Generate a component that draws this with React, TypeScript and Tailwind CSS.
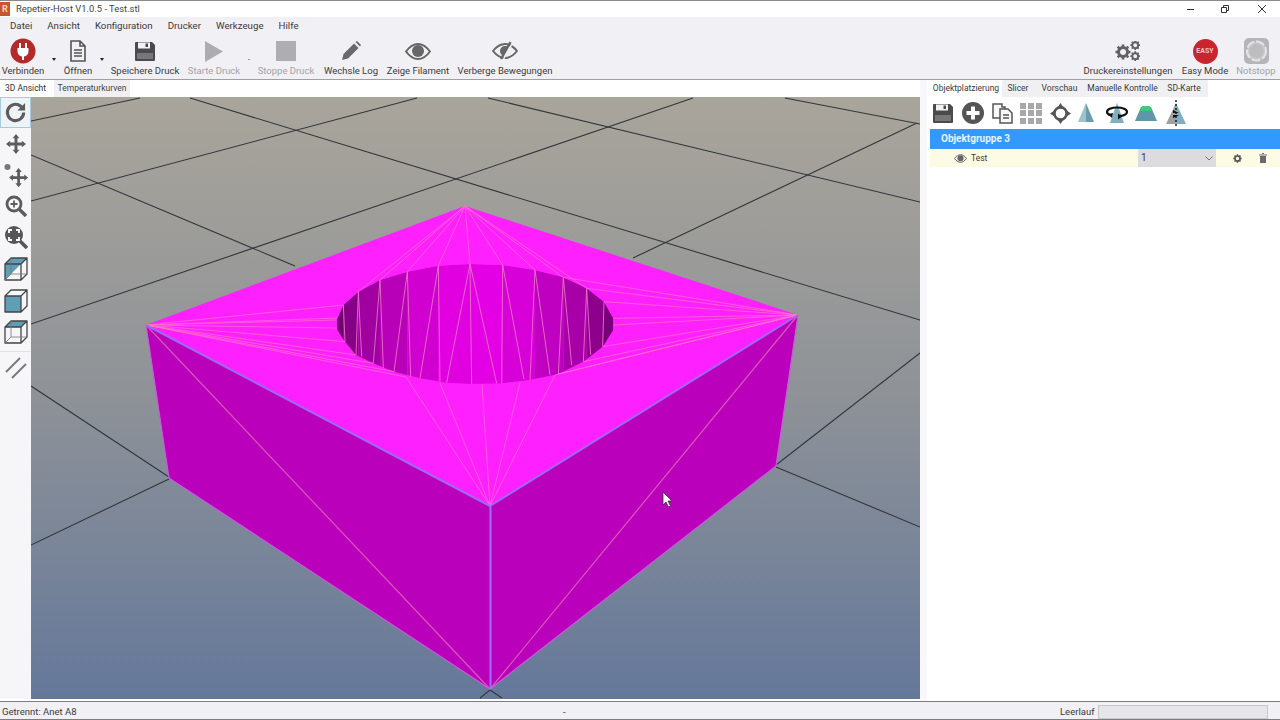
import React from "react";

const toPage = (p: number[]) => [p[0] / 3 + 320, p[1] / 3 + 250];
const topArc = [[50,210],[70,165],[115,125],[180,90],[262,65],[355,47],[450,42],[548,45],[645,60],[730,82],[800,115],[852,155],[880,205]].map(toPage);
const lowArc = [[52,240],[75,275],[108,315],[160,340],[222,365],[300,385],[380,398],[455,402],[545,400],[630,390],[715,372],[790,335],[848,290],[880,240]].map(toPage);
const holeShape = [...topArc, ...[...lowArc].reverse()].map((p) => p.join(",")).join(" ");
const stripColours = ["#700070","#850085","#a000a0","#b800b8","#d000d0","#e000e0","#e400e4","#d800d8","#c000c0","#a800a8","#8c008c","#7a007a"];
const wallLines = [[70,165,75,275],[115,125,125,320],[115,125,108,315],[180,90,160,340],[180,90,190,355],[262,65,222,365],[262,65,272,380],[355,47,300,385],[355,47,360,395],[450,42,380,398],[450,42,455,402],[450,42,530,400],[548,45,545,400],[548,45,612,388],[645,60,630,390],[645,60,690,375],[730,82,715,372],[730,82,755,345],[800,115,790,335],[800,115,812,315],[852,155,848,290]];
const apex = [465, 206], left = [146, 325], right = [798, 315], front = [490, 506];
const fans: [number[], number[][]][] = [
  [apex, [topArc[2], topArc[3], topArc[4], topArc[5], topArc[6], topArc[7], topArc[8], topArc[9], topArc[10]]],
  [left, [topArc[1], topArc[0], [337, 318], [337, 328], lowArc[1], lowArc[2], lowArc[3], lowArc[4], [406, 377]]],
  [right, [topArc[9], topArc[10], topArc[11], topArc[12], [613, 325], lowArc[12], lowArc[11], lowArc[10], [555, 375]]],
  [front, [[406, 377], [440, 383], [482, 384], [520, 383], [555, 375]]],
];
const grid = [
  [31,121,140,98],[31,201,417,98],[31,324,693,98],[31,155,295,266],[190,98,920,320],[488,98,920,202],[785,98,920,124],[633,258,917,123],
  [31,386,169,477],[31,545,169,479],[920,353,776,465],[776,467,920,527],[490,690,480,698],[490,690,502,698],
];

function Scene() {
  return (
    <svg viewBox="31 97 889 602" className="block h-full w-full">
      <defs>
        <clipPath id="hole"><polygon points={holeShape} /></clipPath>
      </defs>
      {grid.map((g, i) => (
        <line key={i} x1={g[0]} y1={g[1]} x2={g[2]} y2={g[3]} stroke="#33363a" strokeWidth="1.1" />
      ))}
      <polygon points="146,325 490,506 490,689 169,478" fill="#bb00bb" />
      <polygon points="798,315 490,506 490,689 776,466" fill="#bb00bb" />
      <polygon points="465,206 798,315 490,506 146,325" fill="#ff20ff" />
      {topArc.slice(0, -1).map((p, i) => {
        const q = topArc[i + 1];
        return <polygon key={i} points={`${p[0]},${p[1]} ${q[0]},${q[1]} ${q[0]},390 ${p[0]},390`} fill={stripColours[i]} clipPath="url(#hole)" />;
      })}
      {wallLines.map((l, i) => {
        const a = toPage([l[0], l[1]]), b = toPage([l[2], l[3]]);
        return <line key={i} x1={a[0]} y1={a[1]} x2={b[0]} y2={b[1]} stroke="#ec78c8" strokeWidth="1" opacity="0.85" />;
      })}
      {fans.map(([o, targets], i) => targets.map((t, j) => (
        <line key={`${i}-${j}`} x1={o[0]} y1={o[1]} x2={t[0]} y2={t[1]} stroke="#ff78c8" strokeWidth="1" opacity="0.65" />
      )))}
      <line x1="146" y1="325" x2="490" y2="689" stroke="#d858b8" strokeWidth="1.200" />
      <line x1="798" y1="315" x2="490" y2="689" stroke="#d858b8" strokeWidth="1.200" />
      <line x1="146" y1="325" x2="169" y2="478" stroke="#c060d8" strokeWidth="1.200" />
      <line x1="798" y1="315" x2="776" y2="466" stroke="#c060d8" strokeWidth="1.200" />
      <line x1="169" y1="478" x2="490" y2="689" stroke="#c060d8" strokeWidth="1.200" />
      <line x1="776" y1="466" x2="490" y2="689" stroke="#c060d8" strokeWidth="1.200" />
      <line x1="146" y1="325" x2="490" y2="506" stroke="#9a6cf0" strokeWidth="2" />
      <line x1="798" y1="315" x2="490" y2="506" stroke="#9a6cf0" strokeWidth="2" />
      <line x1="490.5" y1="506" x2="490.5" y2="689" stroke="#9a70f8" strokeWidth="2" />
      <path d="M663 492v13l3-3 2.500 5 2-1-2.500-5h4z" fill="#fff" stroke="#333" strokeWidth="0.800" />
    </svg>
  );
}

const Doc = () => (
  <svg width="18" height="22" viewBox="0 0 18 22" fill="none" stroke="#555" strokeWidth="1.600">
    <path d="M2 1h9l5 5v15H2zM11 1v5h5" /><path d="M5 10h8M5 13h8M5 16h8" />
  </svg>
);
const Floppy = ({ w = 20, h = 19 }: { w?: number; h?: number }) => (
  <svg width={w} height={h} viewBox="0 0 20 19">
    <path d="M1 0h16l3 3v15a1 1 0 0 1-1 1H1a1 1 0 0 1-1-1V1a1 1 0 0 1 1-1z" fill="#4b4b4e" />
    <rect x="3" y="0.500" width="12" height="6" fill="#f3f3f5" /><rect x="10.500" y="1.500" width="2.500" height="3.500" fill="#4b4b4e" />
    <rect x="2" y="11" width="16" height="6" fill="#77777a" />
  </svg>
);
const Eye = () => (
  <svg width="26" height="17" viewBox="0 0 26 17">
    <path d="M1 8.500C5 3 9 1 13 1s8 2 12 7.500C21 14 17 16 13 16S5 14 1 8.500z" fill="#f0f0f3" stroke="#666" strokeWidth="2" />
    <circle cx="13" cy="8" r="6" fill="#666" />
  </svg>
);
const EyeOff = () => (
  <svg width="26" height="20" viewBox="0 0 26 20">
    <path d="M1 10C5 5 9 3 13 3s8 2 12 7c-4 5-8 7-12 7S5 15 1 10z" fill="#f0f0f3" stroke="#666" strokeWidth="2" />
    <path d="M13 5a5 5 0 0 0-5 5 5 5 0 0 0 3 4.500L16.500 6a5 5 0 0 0-3.500-1z" fill="#666" />
    <path d="M20.500 2 11 19" stroke="#f1f0f4" strokeWidth="1.500" />
    <path d="M18.500 1 9 18" stroke="#666" strokeWidth="2.400" />
  </svg>
);
const Gear = ({ c = "#666", size = 16 }: { c?: string; size?: number }) => (
  <svg width={size} height={size} viewBox="0 0 16 16">
    <circle cx="8" cy="8" r="4.500" fill="none" stroke={c} strokeWidth="3" />
    <path d="M8 0.500v3M8 12.500v3M0.500 8h3M12.500 8h3M2.700 2.700l2.100 2.100M11.200 11.200l2.100 2.100M2.700 13.300l2.100-2.100M11.200 4.800l2.100-2.100" stroke={c} strokeWidth="2.600" />
  </svg>
);
const Cone = () => (
  <svg width="20" height="24" viewBox="0 0 20 24">
    <path d="M10 2 2 21h8z" fill="#9cc4d0" /><path d="M10 2l8 19h-8z" fill="#6a9cb0" />
  </svg>
);

function TbBtn({ w, label, off, children }: { w: string; label: string; off?: boolean; children: React.ReactNode }) {
  return (
    <div className={`flex h-full flex-col items-center ${w}`}>
      <div className="flex h-[27px] items-center justify-center pt-[3px]">{children}</div>
      <div className={`whitespace-nowrap pt-[1px] text-[9.5px] leading-[13px] ${off ? "text-[#a3a3a6]" : "text-[#3a3a3c]"}`}>{label}</div>
    </div>
  );
}
const Dot = ({ w, off }: { w: string; off?: boolean }) => (
  <div className={`flex h-full items-center justify-center pt-[4px] ${w}`}>
    {off ? <span className="block h-[1px] w-[3px] bg-[#999]" /> : <span className="block h-0 w-0 border-x-[2px] border-t-[3px] border-x-transparent border-t-[#222]" />}
  </div>
);
const LeftIcon = ({ active, children }: { active?: boolean; children: React.ReactNode }) => (
  <div className={`flex h-[31px] w-[31px] items-center justify-center ${active ? "border border-[#a9c9dd] bg-[#eef3f8]" : ""}`}>{children}</div>
);
const Cube = ({ mode }: { mode: "half" | "front" | "top" }) => (
  <svg width="24" height="24" viewBox="0 0 24 24" strokeLinejoin="round">
    {mode === "half" && <polygon points="1,7 17,7 1,23" fill="#5f9fb5" />}
    {mode === "half" && <polygon points="1,7 7,1 23,1 17,7" fill="#5f9fb5" />}
    {mode === "front" && <rect x="1" y="7" width="16" height="16" fill="#5f9fb5" />}
    {mode === "top" && <polygon points="1,7 7,1 23,1 17,7" fill="#5f9fb5" />}
    <path d="M1 7h16v16H1zM1 7l6-6h16v16l-6 6M17 7l6-6" fill="none" stroke="#444" strokeWidth="1.300" />
    {mode !== "front" && <path d="M7 1v16h16M7 17l-6 6" fill="none" stroke="#777" strokeWidth="0.800" />}
  </svg>
);
const Cross = ({ size = 24 }: { size?: number }) => (
  <svg width={size} height={size} viewBox="0 0 24 24" fill="none" stroke="#5c5c5e" strokeWidth="3.400">
    <path d="M12 3v18M3 12h18" /><path d="M12 0l-4 5h8zM12 24l-4-5h8zM0 12l5-4v8zM24 12l-5-4v8z" fill="#5c5c5e" stroke="none" />
  </svg>
);
const Lens = ({ children }: { children?: React.ReactNode }) => (
  <svg width="22" height="22" viewBox="0 0 22 22" fill="none" stroke="#5c5c5e">
    <circle cx="9" cy="9" r="7" strokeWidth="2.800" /><path d="M14 14l7 7" strokeWidth="3.400" />{children}
  </svg>
);

export default function App() {
  return (
    <div className="flex h-[720px] w-[1280px] flex-col overflow-hidden bg-[#f1f0f4] font-['Roboto','Open_Sans',sans-serif] text-[#3a3a3c]">
      {/* title bar */}
      <div className="flex h-[17px] items-center border-t border-[#8a8a8a] bg-white">
        <div className="flex h-[14px] w-[10px] items-center justify-center bg-[#c8562c] text-[9px] font-bold leading-none text-[#f6d9b8]">R</div>
        <div className="pl-[6px] text-[9.4px] leading-none text-[#444]">Repetier-Host V1.0.5 - Test.stl</div>
        <div className="ml-auto flex items-center pr-[14px]">
          <span className="mr-[27px] block h-[1px] w-[7px] bg-[#333]" />
          <svg className="mr-[29px]" width="8" height="8" viewBox="0 0 8 8" fill="none" stroke="#333"><path d="M0.500 2.500h5v5h-5zM2.500 2.500v-2h5v5h-2" /></svg>
          <svg width="8" height="8" viewBox="0 0 8 8" stroke="#333"><path d="M0 0l8 8M8 0 0 8" /></svg>
        </div>
      </div>
      {/* menu */}
      <div className="flex h-[19px] items-center gap-[15px] pb-[1px] pl-[10px] text-[9.7px] leading-none">
        {["Datei", "Ansicht", "Konfiguration", "Drucker", "Werkzeuge", "Hilfe"].map((m) => <span key={m}>{m}</span>)}
      </div>
      {/* toolbar */}
      <div className="flex h-[44px] items-start border-b border-[#a0a0a2]">
        <TbBtn w="w-[46px]" label="Verbinden">
          <svg width="26" height="26" viewBox="0 0 26 26">
            <circle cx="13" cy="13" r="12.500" fill="#b32a2c" />
            <path d="M9 5h2v5H9zM15 5h2v5h-2zM7.500 10h11v3.500a5.500 5.500 0 0 1-4.500 5V22h-2v-3.500a5.500 5.500 0 0 1-4.500-5z" fill="#fff" />
          </svg>
        </TbBtn>
        <Dot w="w-[16px]" />
        <TbBtn w="w-[32px]" label="Öffnen"><Doc /></TbBtn>
        <Dot w="w-[16px]" />
        <TbBtn w="w-[70px]" label="Speichere Druck"><Floppy /></TbBtn>
        <TbBtn w="w-[68px]" label="Starte Druck" off>
          <svg width="18" height="21" viewBox="0 0 18 21"><path d="M0 0l18 10.500L0 21z" fill="#adadaf" /></svg>
        </TbBtn>
        <Dot w="w-[2px]" off />
        <TbBtn w="w-[72px]" label="Stoppe Druck" off><div className="h-[20px] w-[20px] bg-[#aeaeb0]" /></TbBtn>
        <TbBtn w="w-[58px]" label="Wechsle Log">
          <svg width="20" height="20" viewBox="0 0 20 20"><path d="M1 19l1.500-6L13 2.500 17.500 7 7 17.500zM14.500 1l1.500-1 4 4-1 1.500z" fill="#69696b" /></svg>
        </TbBtn>
        <TbBtn w="w-[76px]" label="Zeige Filament"><Eye /></TbBtn>
        <TbBtn w="w-[98px]" label="Verberge Bewegungen"><EyeOff /></TbBtn>
        <div className="flex-1" />
        <TbBtn w="w-[90px]" label="Druckereinstellungen">
          <svg width="26" height="20" viewBox="0 0 26 20">
            <g transform="translate(0 3)"><Gear c="#626264" /></g>
            <g transform="translate(15 -1) scale(0.65)"><Gear c="#626264" /></g>
            <g transform="translate(15 10) scale(0.65)"><Gear c="#626264" /></g>
          </svg>
        </TbBtn>
        <TbBtn w="w-[64px]" label="Easy Mode">
          <div className="flex h-[25px] w-[25px] items-center justify-center rounded-full bg-[#c8252f] text-[7px] font-bold leading-none text-[#f4c8cc]">EASY</div>
        </TbBtn>
        <TbBtn w="w-[38px]" label="Notstopp" off>
          <svg width="27" height="26" viewBox="0 0 27 26">
            <rect x="1" y="0" width="25" height="26" rx="5" fill="#b5b5b7" />
            <circle cx="13.500" cy="13" r="9.500" fill="#c8c8ca" stroke="#e4e4e6" strokeWidth="2" strokeDasharray="9 2" />
            <circle cx="13.500" cy="13" r="7" fill="#bdbdbf" />
          </svg>
        </TbBtn>
        <div className="w-[5px]" />
      </div>
      {/* main */}
      <div className="flex h-[621px] bg-white">
        <div className="flex w-[920px] flex-col">
          <div className="flex h-[17px] items-center bg-white text-[8.5px] leading-none">
            <div className="flex h-full w-[54px] items-center pl-[5px] text-[#333]">3D Ansicht</div>
            <div className="flex h-full w-[76px] items-center justify-center bg-[#f0f0f2] text-[#444]">Temperaturkurven</div>
          </div>
          <div className="flex h-[602px]">
            <div className="flex w-[31px] flex-col items-center bg-[#f6f6f9]">
              <LeftIcon active>
                <svg width="23" height="23" viewBox="0 0 24 24" fill="none" stroke="#5c5c5e" strokeWidth="3.200"><path d="M20.500 12a8.500 8.500 0 1 1-3-6.500L20 8" /><path d="M22 2v8h-8z" stroke="none" fill="#5c5c5e" /></svg>
              </LeftIcon>
              <LeftIcon><Cross size={20} /></LeftIcon>
              <LeftIcon>
                <svg width="24" height="24" viewBox="0 0 24 24">
                  <circle cx="3.500" cy="4" r="3" fill="#777" />
                  <g transform="translate(5 5) scale(0.8)"><path d="M12 3v18M3 12h18" stroke="#5c5c5e" strokeWidth="3.400" /><path d="M12 0l-4 5h8zM12 24l-4-5h8zM0 12l5-4v8zM24 12l-5-4v8z" fill="#5c5c5e" /></g>
                </svg>
              </LeftIcon>
              <LeftIcon><Lens><path d="M9 5.500v7M5.500 9h7" strokeWidth="1.800" /></Lens></LeftIcon>
              <LeftIcon>
                <svg width="24" height="24" viewBox="0 0 24 24" fill="none" stroke="#565658">
                  <circle cx="10" cy="10" r="9" fill="#565658" stroke="none" /><path d="M16 16l7 7" strokeWidth="3.600" />
                  <path d="M5 8V5h3M12 5h3v3M15 12v3h-3M8 15H5v-3" stroke="#fff" strokeWidth="1.800" />
                </svg>
              </LeftIcon>
              <div className="h-[1px] w-full" />
              <LeftIcon><Cube mode="half" /></LeftIcon>
              <div className="h-[1px] w-full" />
              <LeftIcon><Cube mode="front" /></LeftIcon>
              <LeftIcon><Cube mode="top" /></LeftIcon>
              <div className="mt-[4px] h-[1px] w-[31px] bg-[#e2e2e6]" />
              <div className="flex h-[31px] w-[31px] items-center justify-center">
                <svg width="22" height="22" viewBox="0 0 22 22" stroke="#77777a" strokeWidth="1.800"><path d="M1 15 15 1M7 21 21 7" /></svg>
              </div>
            </div>
            <div className="w-[889px] bg-linear-to-b from-[#a9a59b] via-[#8e9297] to-[#65789a]">
              <Scene />
            </div>
          </div>
        </div>
        <div className="w-[7px] bg-[#f8f8fa]" />
        <div className="flex flex-1 flex-col pl-[3px]">
          <div className="flex h-[17px] items-center text-[8.5px] leading-none">
            <div className="flex h-full w-[72px] items-center justify-center bg-white">Objektplatzierung</div>
            <div className="flex h-full w-[32px] items-center justify-center bg-[#f0f0f2]">Slicer</div>
            <div className="flex h-full w-[51px] items-center justify-center bg-[#f0f0f2]">Vorschau</div>
            <div className="flex h-full w-[75px] items-center justify-center bg-[#f0f0f2]">Manuelle Kontrolle</div>
            <div className="flex h-full w-[48px] items-center justify-center bg-[#f0f0f2]">SD-Karte</div>
          </div>
          <div className="flex h-[32px] items-center">
            <div className="flex w-[26px] justify-center"><Floppy w={20} h={19} /></div>
            <div className="flex w-[34px] justify-center">
              <svg width="22" height="22" viewBox="0 0 22 22"><circle cx="11" cy="11" r="11" fill="#555558" /><path d="M11 4.500v13M4.500 11h13" stroke="#fff" strokeWidth="4" /></svg>
            </div>
            <div className="flex w-[24px] justify-center">
              <svg width="21" height="21" viewBox="0 0 21 21" fill="#f8f8f8" stroke="#555" strokeWidth="1.500"><path d="M1 1h9v3l3 0v11H1z" /><path d="M8 6h8l4 4v10H8z" /><path d="M11 12h6M11 15h6" /></svg>
            </div>
            <div className="grid w-[34px] grid-cols-3 gap-[1.500px] px-[6px]">
              {[0,1,2,3,4,5,6,7,8].map((i) => <span key={i} className="h-[6px] bg-[#a8a8aa]" />)}
            </div>
            <div className="flex w-[24px] justify-center">
              <svg width="21" height="21" viewBox="0 0 24 24"><circle cx="12" cy="12" r="7" fill="none" stroke="#555" strokeWidth="3" /><path d="M12 0l-4 6h8zM12 24l-4-6h8zM0 12l6-4v8zM24 12l-6-4v8z" fill="#555" /></svg>
            </div>
            <div className="flex w-[28px] justify-center"><Cone /></div>
            <div className="flex w-[34px] justify-center">
              <svg width="24" height="24" viewBox="0 0 24 24">
                <path d="M12 2 5 22h14z" fill="#7fafc0" />
                <path d="M6 14.500C3 13.500 2 12 2 11c0-2.500 4.500-4.500 10-4.500S22 8.500 22 11c0 2-3 3.500-7 4.200" fill="none" stroke="#111" strokeWidth="2.200" />
                <path d="M13 12.500l4 3-4 3zM3 13l5-1-1 5z" fill="#111" />
              </svg>
            </div>
            <div className="flex w-[24px] justify-center">
              <svg width="22" height="15" viewBox="0 0 22 15"><path d="M6 1h10l6 14H0z" fill="#5f96a8" /><path d="M7 1a4 3 0 0 1 8 0l2 4H5z" fill="#44c878" /></svg>
            </div>
            <div className="flex w-[36px] justify-center">
              <svg width="24" height="26" viewBox="0 0 24 26">
                <path d="M12 3 2 24h10z" fill="#a0a0a2" /><path d="M12 3l10 21H12z" fill="#7fafc0" />
                <path d="M12 0v26" stroke="#111" strokeWidth="1.400" strokeDasharray="2 2" />
                <path d="M9 13h6l-6-3zM9 15h6l-6 3z" fill="#111" />
              </svg>
            </div>
          </div>
          <div className="flex h-[20px] items-center bg-[#3399ff] pb-[1px] pl-[11px] text-[10px] font-bold leading-none text-[#e8f3ff]">Objektgruppe 3</div>
          <div className="flex h-[18px] items-center bg-[#fdfbe3] text-[8.5px] leading-none">
            <div className="flex w-[208px] items-center pl-[24px]">
              <svg width="13" height="9" viewBox="0 0 26 17"><path d="M1 8.500C5 3 9 1 13 1s8 2 12 7.500C21 14 17 16 13 16S5 14 1 8.500z" fill="#eee" stroke="#666" strokeWidth="2" /><circle cx="13" cy="8" r="6" fill="#666" /></svg>
              <span className="pl-[4px]">Test</span>
            </div>
            <div className="flex h-full w-[78px] items-center justify-between bg-[#dcdcde] px-[3px] text-[10px]">
              <span>1</span>
              <svg width="8" height="5" viewBox="0 0 8 5" fill="none" stroke="#777"><path d="M0.500 0.500 4 4l3.500-3.500" /></svg>
            </div>
            <div className="flex w-[42px] justify-center pl-[1px]"><Gear c="#555" size={9} /></div>
            <div className="flex w-[10px] justify-center">
              <svg width="8" height="10" viewBox="0 0 8 10" fill="#6a6a6c"><path d="M0 1.500h8v1H0zM3 0h2v1H3zM1 3h6v7H1z" /></svg>
            </div>
          </div>
        </div>
      </div>
      {/* status */}
      <div className="flex h-[19px] items-center border-y border-y-[#7d7d7f] bg-[#f1f0f4] text-[9.5px] leading-none">
        <div className="w-[563px] pl-[2px] pt-[3px]">Getrennt: Anet A8</div>
        <div className="w-[497px] pt-[3px]">-</div>
        <div className="w-[38px] pt-[3px]">Leerlauf</div>
        <div className="mt-[2px] h-[14px] w-[170px] border border-[#c8c8ca] bg-[#e6e6e8]" />
      </div>
    </div>
  );
}
